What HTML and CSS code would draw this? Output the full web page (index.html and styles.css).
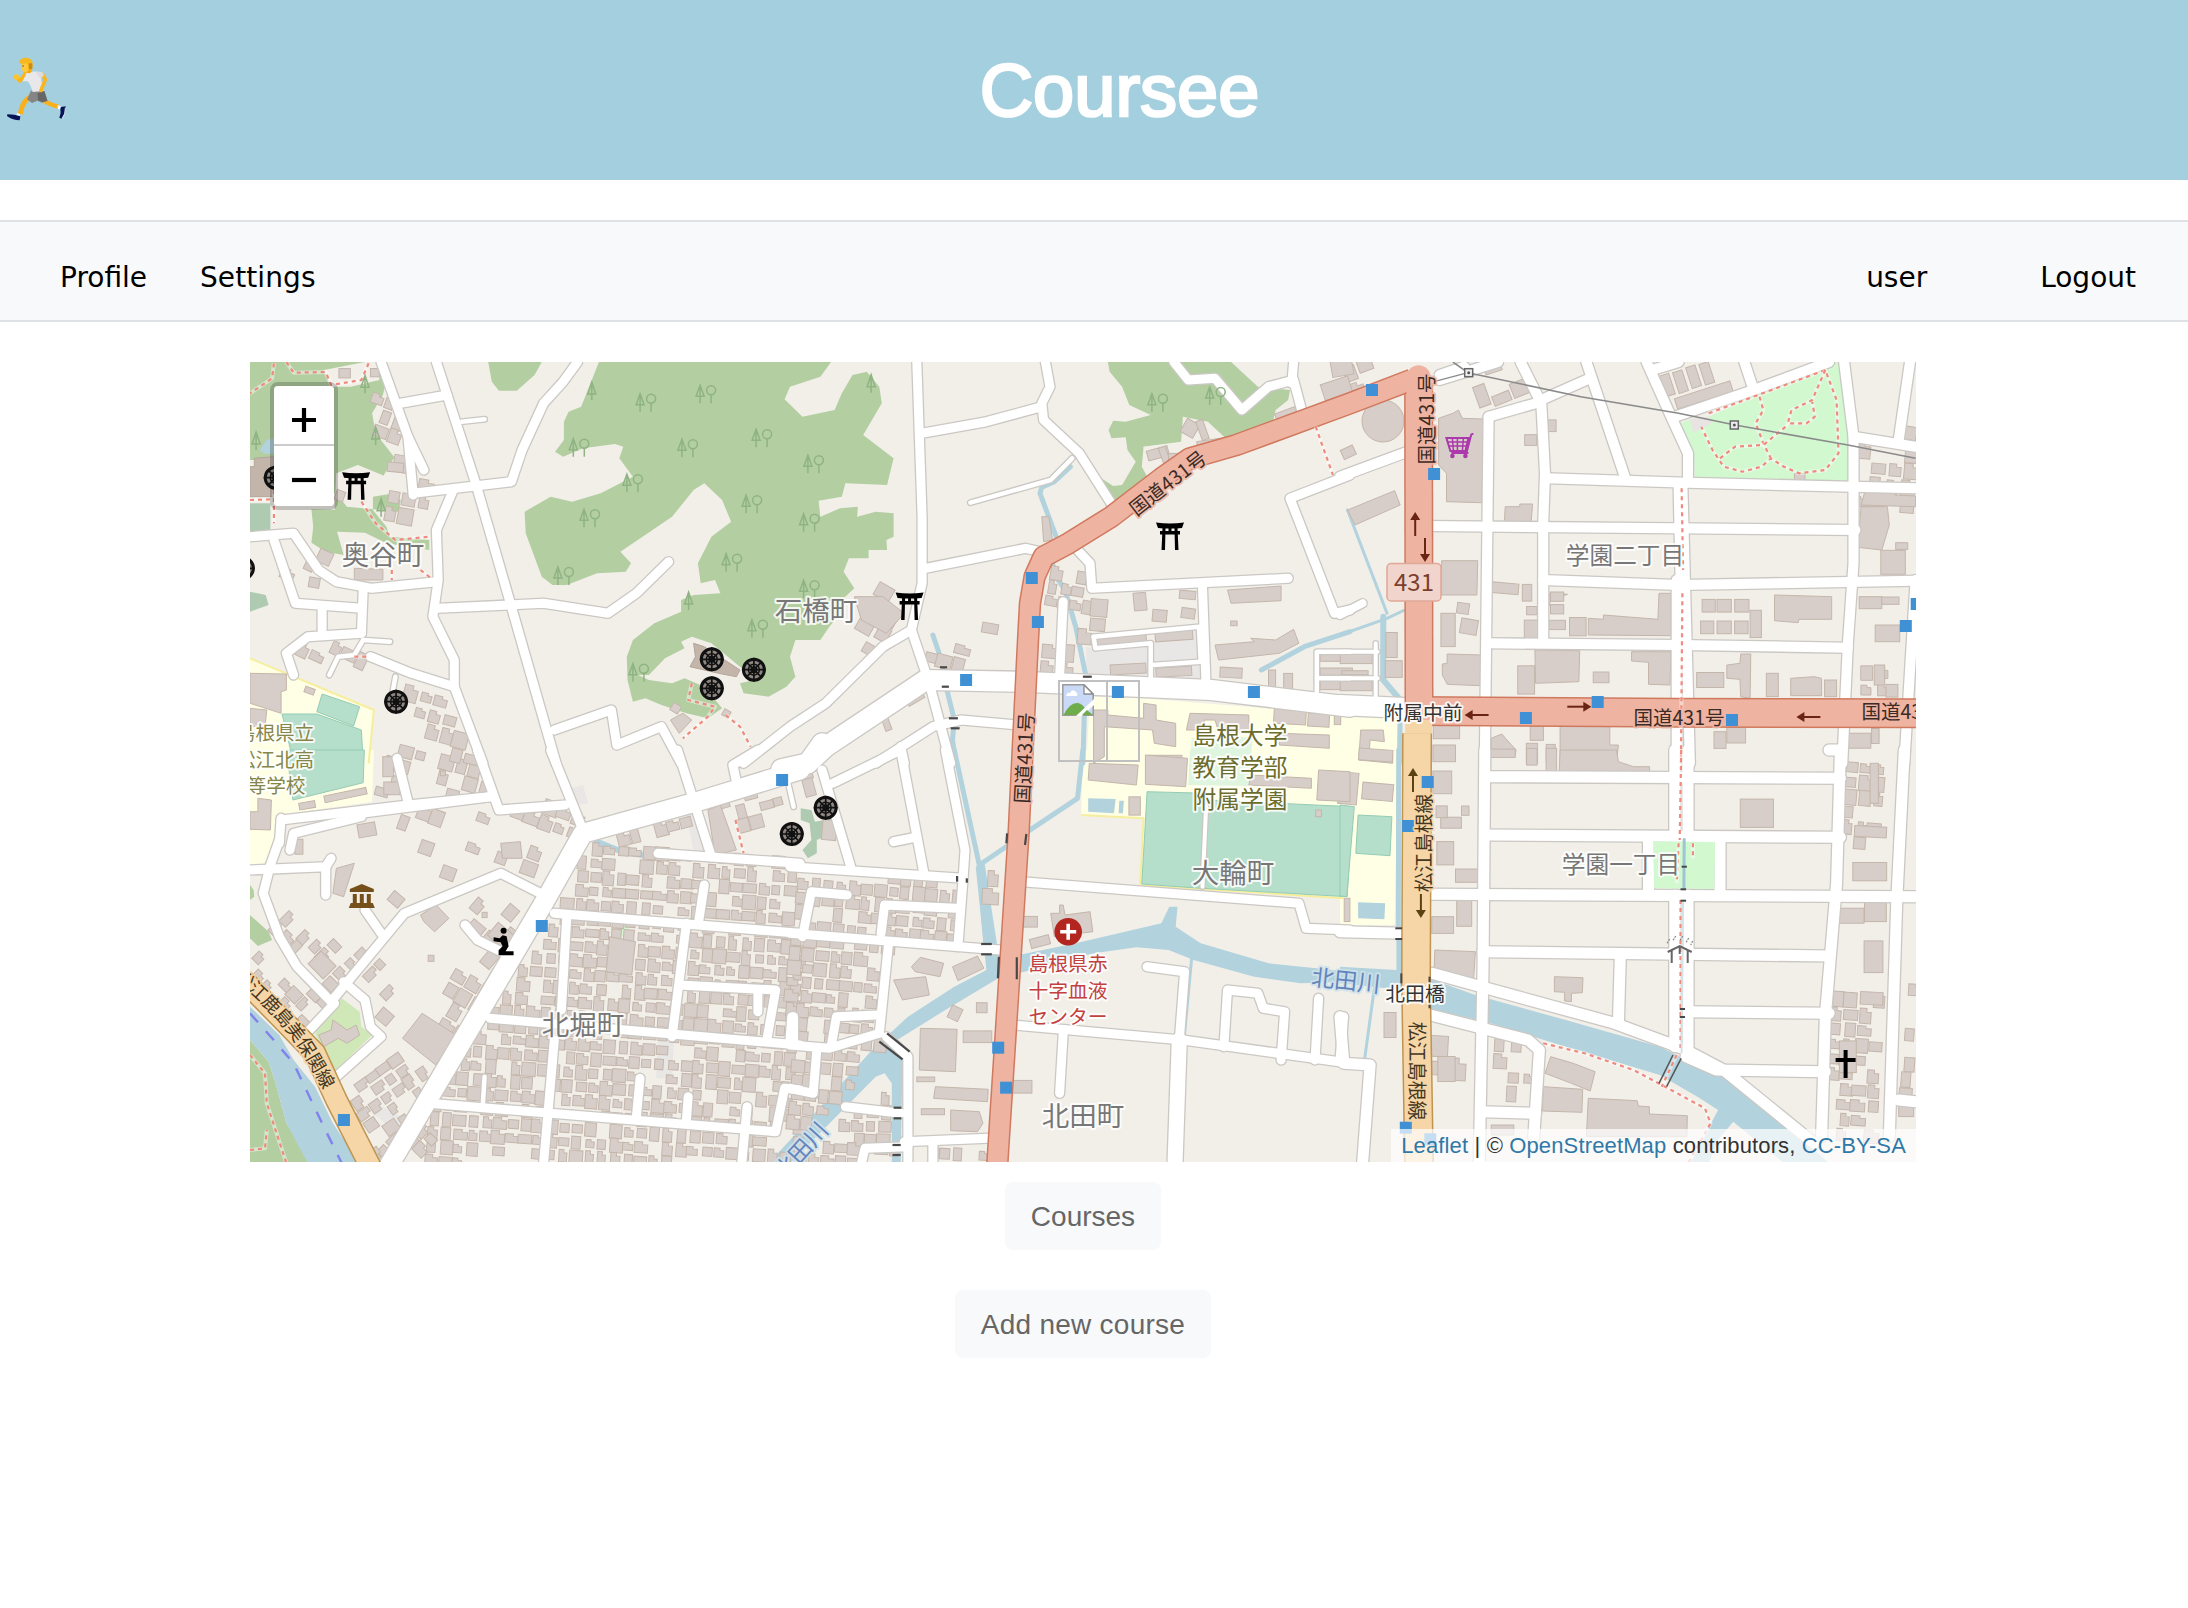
FILE: index.html
```html
<!DOCTYPE html>
<html lang="en">
<head>
<meta charset="utf-8">
<title>Coursee</title>
<link rel="stylesheet" href="styles.css">
</head>
<body>
<header class="banner">
  <svg class="runner" viewBox="0 150 153 240" aria-label="runner">
    <path d="M78 218L60 243 49 233" fill="none" stroke="#fbb51c" stroke-width="11" stroke-linecap="round" stroke-linejoin="round"/>
    <circle cx="49" cy="231" r="8" fill="#ffc52e"/>
    <path d="M90 292Q68 300 61 342" fill="none" stroke="#fbb01a" stroke-width="15"/>
    <path d="M128 300Q150 315 178 321" fill="none" stroke="#fbb01a" stroke-width="13"/>
    <path d="M52 339l9 4-3 7-10-3zM173 316l9 2-1 11-8-3z" fill="#fff"/>
    <path d="M22 343q15 1 25 2l14 4-2 12q-20 0-38-13z" fill="#071557"/>
    <path d="M183 321l14-2q-1 24-13 37l-6-3q6-14 3-26z" fill="#071557"/>
    <path d="M196 323q1 20-9 32" stroke="#d9dfe8" stroke-width="3" fill="none"/>
    <path d="M93 272h40l10 31-18 5-13-6-16 7-15-11z" fill="#858585"/>
    <path d="M113 280l20-6 9 28-14 4-14-5z" fill="#666"/>
    <path d="M80 218q25-7 48-1l-5 20 8 36-33 3q-6-22-15-32l-15 0z" fill="#e8e8ea"/>
    <path d="M127 222l9 17-13 32" fill="none" stroke="#fbb51c" stroke-width="11" stroke-linecap="round" stroke-linejoin="round"/>
    <path d="M108 217l20 0 4 10-12 8z" fill="#dcdce0"/>
    <path d="M80 200h15v15q-8 8-15 2z" fill="#f5a914"/>
    <ellipse cx="76" cy="200" rx="13" ry="16" fill="#ffc83d"/>
    <path d="M57 188q3-16 23-15 20 2 18 22l-1 12-12 2-3-19q-15 4-25-2z" fill="#f6b81f"/>
    <path d="M86 190l11 0 0 17-10 1z" fill="#cc8b13"/>
    <circle cx="69" cy="198" r="2" fill="#5b3b13"/>
  </svg>
  <h1 class="title">Coursee</h1>
</header>
<nav class="menu">
  <a class="profile">Profile</a>
  <a class="settings">Settings</a>
  <span class="user">user</span>
  <a class="logout">Logout</a>
</nav>
<main class="content">
  <section class="map">
    <svg class="tiles" id="tiles" viewBox="250 362 1666 800"></svg>
    <div class="marker-shadow"></div>
    <div class="marker">
      <svg class="broken" viewBox="0 0 32 32">
        <path d="M.8.8H22L31.200 10V31.200H.8z" fill="#c9d9f6" stroke="#9a9a9a" stroke-width="1.500"/>
        <path d="M4 12q1-4 4-3 2-5 6-1 2 1 1 4z" fill="#fff"/>
        <path d="M1.500 31Q8 18 16 19q5 1 8 7v5z" fill="#6fad4c"/>
        <path d="M32 15L14 32h6L32 21z" fill="#fff"/>
        <path d="M20 31l5-5 6 5z" fill="#6fad4c"/>
        <path d="M22 1v9h9z" fill="#fff" stroke="#8d8d8d" stroke-width="1.300"/>
      </svg>
    </div>
    <div class="zoom">
      <a class="zoom-button"><svg viewBox="0 0 24 24"><path d="M0 12h24M12 0v24" stroke="#000" stroke-width="4.200"/></svg></a>
      <a class="zoom-button"><svg viewBox="0 0 24 24"><path d="M0 12h24" stroke="#000" stroke-width="4.200"/></svg></a>
    </div>
    <div class="attribution"><a>Leaflet</a> | © <a>OpenStreetMap</a> contributors, <a>CC-BY-SA</a></div>
  </section>
  <button class="btn courses">Courses</button>
  <button class="btn add">Add new course</button>
</main>
<script src="map.js"></script>
</body>
</html>
```
FILE: styles.css
```css
* { box-sizing: border-box; }
body { margin: 0; background: #fff; font-family: "Liberation Sans", Arial, sans-serif; color: #212529; }
.banner { height: 180px; background: #a4cfdf; display: flex; align-items: center; }
.runner { width: 51px; height: 80px; overflow: visible; flex: none; }
.title { flex: 1; margin: 1px 0 0; text-align: center; color: #fff; font-size: 74px; line-height: 90px; font-weight: 400; letter-spacing: 0; -webkit-text-stroke: 2.6px #fff; }
.menu { margin-top: 40px; height: 102px; padding: 14px 52px 0 60px; display: flex; align-items: center; background: #f8f9fb; border-top: 2px solid #dee2e6; border-bottom: 2px solid #dee2e6; font: 28px/42px "DejaVu Sans", Verdana, sans-serif; color: #000; }
.profile { width: 140px; }
.user { margin-left: auto; width: 174px; }
.settings { letter-spacing: .1px; }
.content { display: flex; flex-direction: column; align-items: center; padding: 40px 22px 0 0; }
.map { position: relative; width: 1666px; height: 800px; overflow: hidden; background: #f2efe9; }
.tiles { display: block; width: 1666px; height: 800px; font-family: "Noto Sans CJK JP", "Noto Sans", sans-serif; }
.tiles text { text-anchor: middle; dominant-baseline: central; paint-order: stroke; stroke: #fff; stroke-width: 4px; stroke-linejoin: round; stroke-opacity: .85; }
.marker, .marker-shadow { position: absolute; left: 808px; top: 318px; height: 82px; border: 2px solid #c0c0c0; }
.marker { width: 50px; padding: 2px; }
.marker-shadow { width: 82px; }
.broken { display: block; width: 32px; height: 32px; }
.zoom { position: absolute; left: 20px; top: 20px; border: 4px solid rgba(0,0,0,.2); border-radius: 8px; background-clip: padding-box; }
.zoom-button { display: flex; width: 60px; height: 60px; align-items: center; justify-content: center; background: #fff; border-radius: 0 0 4px 4px; }
.zoom-button:first-child { padding-top: 10px; border-bottom: 2px solid #ccc; border-radius: 4px 4px 0 0; }
.zoom-button:last-child { padding-top: 8px; }
.zoom-button svg { width: 24px; height: 24px; }
.attribution { position: absolute; right: 0; bottom: 0; width: 525px; height: 33px; padding-right: 10px; text-align: right; white-space: nowrap; background: rgba(255,255,255,.7); font-size: 22px; line-height: 33px; letter-spacing: .14px; color: #333; }
.attribution a { color: #2f78a8; }
.btn { height: 68px; padding: 0; border: 0; border-radius: 8px; background: #f8f9fb; color: #666; font: 28px/69px "Liberation Sans", Arial, sans-serif; }
.courses { width: 156px; margin-top: 20px; }
.add { width: 256px; margin-top: 40px; letter-spacing: .25px; }
```
FILE: map.js
```js
// Each sheet has an origin and a survey scale; features are listed in sheet units.
const sheets = {
  A: [240, 350, 2.8], B: [790, 350, 2.8], C: [1340, 350, 2.658],
  D: [240, 750, 2.8], E: [790, 750, 2.8], F: [1340, 750, 2.658]
};
const conv = (s, x, y) => [+(sheets[s][0] + x / sheets[s][2]).toFixed(1), +(sheets[s][1] + y / 3).toFixed(1)];
const pts = (s, str) => str.trim().split(/\s+/).map(p => conv(s, ...p.split(',').map(Number)));
const out = { land: '', building: '', water: '', casing: '', road: '', main: '', path: '', over: '', icon: '', label: '' };
const area = (s, fill, list, layer = 'land', stroke = 'none') => list.split('|').forEach(p => {
  out[layer] += `<polygon points="${pts(s, p).join(' ')}" fill="${fill}" stroke="${stroke}"/>`;
});
const line = (layer, s, p, w, color, extra = '') => {
  out[layer] += `<polyline points="${pts(s, p).join(' ')}" fill="none" stroke="${color}" stroke-width="${w}" stroke-linejoin="round" ${extra}/>`;
};
const roads = (s, w, list) => list.split('|').forEach(p => {
  line('casing', s, p, w + 2.6, '#cbc8c4', 'stroke-linecap="round"');
  line('road', s, p, w, '#fff', 'stroke-linecap="round"');
});
const stream = (s, w, list) => list.split('|').forEach(p => line('water', s, p, w, '#b2d2dd', 'stroke-linecap="round"'));
const foot = (s, list) => list.split('|').forEach(p => {
  line('path', s, p, 4, '#fff', 'stroke-opacity=".45"');
  line('path', s, p, 2.2, '#f08a7c', 'stroke-dasharray="4 4"');
});
const bld = (s, list) => area(s, '#d7cec9', list, 'building', '#c4b6ab');
// Boxes: "x,y,w,h,angle" around the centre, size in sheet units.
const box = (s, list) => list.trim().split(/\s+/).forEach(b => {
  const [x, y, w, h, a = 0] = b.split(',').map(Number);
  const [cx, cy] = conv(s, x, y), W = w / sheets[s][2], H = h / 3;
  out.building += `<rect x="${(cx - W / 2).toFixed(1)}" y="${(cy - H / 2).toFixed(1)}" width="${W.toFixed(1)}" height="${H.toFixed(1)}" transform="rotate(${a} ${cx} ${cy})" fill="#d7cec9" stroke="#c4b6ab"/>`;
});
let seed = 7;
const rnd = () => (seed = (seed * 16807) % 2147483647) / 2147483647;
const inside = (x, y, poly) => {
  let r = false;
  for (let i = 0, j = poly.length - 1; i < poly.length; j = i++) {
    const [xi, yi] = poly[i], [xj, yj] = poly[j];
    if (yi > y !== yj > y && x < (xj - xi) * (y - yi) / (yj - yi) + xi) r = !r;
  }
  return r;
};
// Houses set close together in a block, turned to the street angle.
const houses = (s, p, angle, density = .85, step = 14) => {
  const poly = pts(s, p), xs = poly.map(q => q[0]), ys = poly.map(q => q[1]);
  const cx = (Math.min(...xs) + Math.max(...xs)) / 2, cy = (Math.min(...ys) + Math.max(...ys)) / 2;
  const R = Math.hypot(Math.max(...xs) - cx, Math.max(...ys) - cy), a = angle * Math.PI / 180;
  for (let v = -R; v < R; v += step) for (let u = -R; u < R; u += step * .93) {
    const x = cx + u * Math.cos(a) - v * Math.sin(a), y = cy + u * Math.sin(a) + v * Math.cos(a);
    const w = step * (.55 + rnd() * .45), h = step * (.55 + rnd() * .5), keep = rnd() < density, ell = rnd() < .5, dx = (rnd() - .5) * 3;
    if (!keep || !inside(x, y, poly)) continue;
    const d = ell ? `M${-w / 2} ${-h / 2}h${w * .6}v${h * .25}h${w * .4}v${h * .75}h${-w}z` : `M${-w / 2} ${-h / 2}h${w}v${h}h${-w}z`;
    out.building += `<path d="${d}" transform="translate(${(x + dx).toFixed(1)} ${y.toFixed(1)}) rotate(${angle})" fill="#d7cec9" stroke="#c4b6ab"/>`;
  }
};
const G = '#b3cfa2', SCHOOL = '#ffffe5', PITCH = '#b5decb', PARK = '#d2f8d0', GREY = '#e9e7e6';

// Woods and parks
area('A', G, `28,36 390,36 410,90 400,135 370,190 380,250 432,322 400,380 350,368 270,370 265,480 200,478 205,530 200,578 240,605 290,615 272,545 350,548 410,580 530,600 530,570 420,560 410,530 372,480 372,440 430,430 450,450 445,485 300,470 270,430 100,430 100,330 28,330|695,36 845,36 825,75 775,122 725,122 705,95|1005,36 1655,36 1625,80 1540,110 1525,148 1575,200 1665,180 1685,130 1715,75 1755,65 1790,110 1797,160 1745,255 1830,325 1812,405 1695,400 1685,440 1620,452 1625,500 1680,475 1730,470 1728,500 1780,485 1830,490 1830,560 1810,570 1812,600 1760,600 1760,625 1705,625 1690,665 1720,715 1690,745 1690,780 1650,830 1625,870 1555,870 1540,920 1555,980 1530,1010 1480,1040 1410,1030 1400,1000 1440,990 1400,950 1320,880 1265,860 1235,875 1245,895 1190,925 1145,975 1115,975 1145,990 1210,1000 1245,985 1300,1010 1350,1075 1310,1105 1250,1090 1180,1065 1135,1045 1100,1055 1085,990 1083,920 1100,870 1160,820 1235,785 1235,750 1270,735 1345,730 1330,690 1290,700 1282,640 1320,560 1375,515 1350,450 1300,400 1270,420 1210,500 1065,605 1095,640 1080,665 1000,670 915,705 875,705 845,680 800,550 797,485 870,440 930,455 1010,430 1100,380 1062,325 1073,290 1050,282 960,295 905,320 882,305 907,270 907,215 920,185 955,170 985,90`);
area('A', '#f2efe9', '235,60 350,36 390,36 390,90 310,110 255,110|330,345 410,380 370,430 300,470 270,430 270,370');
area('A', '#aecbb2', '28,460 85,460 85,545 28,545|28,725 72,735 80,765 28,785');
area('B', G, '890,36 1235,36 1310,110 1400,120 1395,150 1360,180 1350,225 1220,270 1110,275 990,290 995,360 1010,400 905,465 865,380 905,408 930,405 968,335 945,300 940,262 900,265 892,240 905,212 940,215 1010,195 950,165 930,110 895,65');
area('B', '#f2efe9', '1100,200 1170,215 1220,265 1120,310 1010,400 985,350 990,290 1095,275');
area('D', G, '28,405 38,420 40,440 28,450|28,495 80,545 90,570 50,588 28,565|28,870 80,935 100,1000 130,1120 200,1240 28,1240');
area('D', '#d0e8b8', '285,745 335,785 340,830 370,855 265,965 210,850');
area('D', PARK, '1045,520 1090,525 1085,562 1042,555');
area('E', '#aecbb2', '30,175 60,180 70,215 122,205 120,250 75,270 75,310 50,325 35,300 60,270 55,220 30,210');
area('C', PARK, '903,222 930,208 980,200 1300,36 1330,36 1352,270 1352,398 942,385 942,330');
// School grounds
area('A', SCHOOL, '28,925 375,1080 360,1240 28,1240');
area('D', SCHOOL, '28,0 375,0 370,155 110,195 85,345 28,345');
area('B', SCHOOL, '840,1040 985,1045 1568,1095 1568,1240 830,1240');
area('E', SCHOOL, '820,0 1568,0 1568,530 1548,530 1550,445 985,405 990,205 815,195');
area('C', SCHOOL, '0,1100 155,1105 155,1240 0,1240'); area('F', SCHOOL, '0,0 155,0 145,525 0,525');
line('land', 'A', '28,925 375,1080 360,1240', 2, '#f6ee9c'); line('land', 'E', '815,195 990,205 980,405 1550,445', 2, '#f6ee9c');
area('A', PITCH, '230,1032 335,1070 318,1128 215,1085|118,1092 215,1092 340,1140 345,1240 150,1240', 'land', '#94ccb5');
area('D', PITCH, '130,0 348,0 345,98 148,150', 'land', '#94ccb5');
area('E', PITCH, '1000,125 1168,130 1150,415 985,402|1168,150 1575,170 1560,440 1155,415', 'land', '#94ccb5');
area('F', PITCH, '0,165 38,170 18,440 0,438|48,195 138,200 133,317 42,310', 'land', '#94ccb5');
area('E', '#e0f5e0', '1120,0 1290,0 1285,108 1115,105'); area('B', '#e0f5e0', '1125,1165 1295,1160 1290,1240 1120,1240');
// Parking
area('B', GREY, '870,905 1000,890 1005,995 830,985 830,890|1020,850 1140,840 1150,1005 1020,990');
area('D', GREY, '1170,870 1215,870 1210,985 1165,985|375,1055 465,1110 450,1155 365,1085|930,115 960,105 975,160 945,165|1250,195 1280,190 1300,305 1270,305');
area('C', '#e8e4e3', '930,208 980,200 990,218 940,248');

// Built-up blocks
houses('D', '990,265 1300,300 1568,345 1568,1240 520,1240 540,1040 700,780 860,560 ', 4, .9, 14);
houses('E', '0,370 470,390 480,580 270,600 240,850 280,880 100,1080 0,1200', 5, .88, 14);
houses('D', '360,1180 520,1080 560,1240 400,1240', 45, .8, 14);
houses('D', '300,1000 430,890 540,960 480,1080 380,1220 ', 55, .7);
houses('D', '90,440 230,560 400,590 250,740 150,650 90,540', 45, .55);
houses('D', '330,690 400,600 460,700 390,790', 45, .6);
houses('D', '30,590 240,750 190,840 30,690', 45, .7);
houses('D', '430,190 650,180 960,170 980,260 880,430 730,370 620,400 510,390 520,330 450,250', 20, .42, 16);
houses('D', '590,700 660,640 720,690 690,780 600,900 500,800', 30, .7, 16);
houses('D', '640,430 830,440 800,520 740,640 640,650', 40, .5, 16);
houses('D', '1010,250 1280,180 1300,310 1060,300', -15, .6);
houses('D', '1350,150 1500,110 1568,170 1480,250 1390,230', -15, .5);
houses('D', '400,0 700,0 700,130 390,160', 15, .6, 15);
houses('A', '470,1000 600,1040 660,1240 560,1200 480,1120', 15, .7, 16);
houses('A', '150,900 330,850 420,990 270,1000', 25, .6, 16);
houses('A', '40,575 220,600 200,710 130,690', 25, .6, 16);
houses('A', '370,150 430,130 460,290 390,280', 20, .9, 15);
houses('A', '390,330 460,330 560,450 530,550 420,530', 10, .6, 17);
houses('B', '190,700 310,740 330,840 230,970', 30, .7, 19);
houses('B', '370,850 540,870 530,950 390,950', 15, .7, 16);
houses('B', '700,680 830,620 840,780 720,790', 10, .8, 14); houses('B', '700,840 850,850 850,970 700,970', 5, .6, 18);
houses('B', '840,740 920,760 900,840 840,820', 5, .8, 17);
houses('C', '1380,290 1530,310 1530,470 1380,470', 5, .7, 17); houses('C', '1370,970 1480,950 1480,1040 1370,1040', 0, .7, 17);
houses('C', '0,40 180,40 40,150 0,150', -20, .7, 20);
houses('F', '1345,30 1470,30 1455,280 1345,280', 5, .85, 15); houses('F', '1300,720 1440,720 1430,1160 1310,1160', 4, .75, 15);
houses('F', '1500,450 1535,450 1535,1100 1490,1100', 4, .5, 15);
houses('F', '395,860 510,900 510,1060 390,1050', 3, .65, 16); houses('F', '245,830 305,830 320,1130 245,1130', 3, .4, 22);
houses('E', '0,20 90,50 60,180 0,160', -15, .5, 18); houses('E', '150,1100 280,1030 280,1180 160,1180', 2, .8);
houses('E', '500,400 590,340 580,590 550,590 530,420', 3, .8, 18); houses('E', '0,1200 300,1180 560,1190 560,1240 0,1240', 3, .7);
// Larger buildings
area('A', '#c3b5aa', '40,325 95,320 95,440 28,440 28,350 40,350|1270,880 1300,890 1400,960 1390,980 1340,970 1260,950 1275,920', 'building', '#b3a59a');
bld('A', '28,970 130,972 130,1020 115,1025 115,1090 28,1060|28,1075 75,1080 70,1130 28,1130|320,655 400,658 400,690 320,690|1205,1110 1240,1090 1265,1110 1230,1150');
box('A', '237,622,40,40,25 293,70,32,28 378,68,25,25 195,1022,28,18,20 208,698,30,30,10 435,352,45,28,5 1220,1075,25,25,30 1362,1090,20,20,30 280,437,25,30,20');
bld('B', '705,500 725,500 735,570 710,575|960,730 995,727 1000,780 965,783|1190,885 1300,875 1290,865 1360,870 1410,838 1425,880 1370,910 1200,930|1225,720 1375,708 1375,752 1235,760|180,740 260,740 320,790 270,850 200,810');
box('B', '560,835,45,30,10 1035,797,40,35,5 1113,735,45,25,5 1115,790,38,30,8 925,870,145,28,-4 1075,858,105,28,-4 947,957,100,30,-3 1075,965,100,28,-3 1235,968,62,30,3 1243,820,18,14 1350,990,20,60 1395,995,25,50 1530,920,90,28 1530,965,90,22 1530,1005,90,28 1545,50,60,55,-10 1530,115,80,50,-18 1390,195,60,30,-20 1120,235,40,45,30 1155,240,20,60,-20 1180,280,80,22,-8 1030,310,60,30,-15 1050,320,20,60,-20 1075,320,30,20 350,1045,50,25,-30 270,1120,18,45,-20');
bld('B', '850,1080 890,1080 890,1095 990,1105 990,1060 1025,1065 1025,1110 1080,1120 1080,1190 1020,1180 1015,1140 880,1130 880,1220 850,1240|1120,1090 1285,1095 1285,1150 1200,1145 1190,1110 1160,1110 1160,1140 1110,1140|1370,1150 1510,1155 1510,1195 1370,1185');
box('B', '1400,1100,90,45,3 1480,1110,60,40,3 1533,1110,18,28 1050,1228,95,24');
bld('C', '262,205 300,190 315,180 325,205 383,207 377,458 283,455 283,370 262,345|270,632 366,632 364,735 270,735|20,480 145,422 160,465 40,525|439,470 478,470 478,462 512,462 508,518 437,516|555,730 605,733 560,750 555,770|660,805 700,808 700,795 845,808 848,730 880,730 880,857 660,855|518,900 637,902 635,995 520,1000|285,912 375,915 373,1007 285,1003 272,975 272,942 285,940|775,905 880,905 877,1005 820,1003 820,937 775,933|1385,470 1455,470 1460,525 1440,600 1375,592|1155,735 1307,740 1307,808 1220,808 1218,818 1155,812|1065,912 1092,912 1090,1045 1065,1040 1063,988 1028,985 1028,945 1063,940|1198,985 1260,980 1280,985 1280,1037 1198,1037|1400,405 1475,405 1475,435 1530,438 1530,470 1385,465');
out.building += `<circle cx="1383" cy="421" r="21" fill="#d7cec9" stroke="#c4b6ab"/>`;
box('C', '507,270,32,32 562,227,25,35 287,840,38,100 343,830,45,45,10 327,775,32,32,8 440,715,70,32,5 497,728,25,50 510,782,28,25 508,838,36,55 577,740,35,28 577,778,35,28 577,825,44,28 632,830,44,55 694,982,42,32 495,990,45,85 984,990,72,45 980,767,35,38 1021,767,38,38 1068,767,38,38 976,832,35,38 1021,832,38,38 1067,832,36,38 1105,822,30,82 1149,1005,32,70 1304,1015,32,50 1455,850,65,50 1470,637,65,72 1493,588,32,20 1410,758,60,36 1463,752,46,22 1434,975,28,60 1467,1022,32,38 1515,250,35,40,10 870,105,26,65,-18 905,95,26,65,-18 940,80,26,65,-18 975,70,26,65,-18 967,135,155,33,-18 377,137,32,65,-20 430,145,48,30,-22 478,115,45,45,-22 22,307,35,30,-25 405,50,45,35,-18 137,885,30,75 143,957,45,50 43,927,85,28 40,968,70,12 43,1007,85,30 1222,380,28,20 283,1145,70,42 277,1210,60,50 523,1150,35,42 510,1210,30,60 560,1208,24,50 1010,1170,32,50 1053,1155,50,48 1380,1172,62,45 1423,1158,20,45');
bld('C', '402,1165 430,1152 440,1165 468,1200 465,1220 402,1218|585,1125 717,1130 717,1185 740,1185 735,1240 585,1240|55,1140 115,1140 118,1175 80,1170 78,1205 140,1212 140,1240 50,1230');
bld('F', '585,0 735,0 740,35 780,50 823,50 823,66 583,64|660,1045 790,1052 793,1068 822,1070 822,1092 923,1097 922,1160 655,1160|540,1010 645,1018 643,1087 538,1083|560,920 620,940 678,965 665,1023 615,1000 545,970|570,680 646,683 644,728 615,730 615,755 597,753 597,727 570,725|252,600 360,605 355,688 250,660');
box('F', '1108,190,88,85 272,97,50,68 100,125,82,50,5 22,115,50,95,5 337,377,60,40 273,525,58,50 330,490,40,78 283,957,46,75 433,10,65,25 510,20,28,50 562,30,28,70 1408,365,90,55 1418,620,50,95 1423,480,58,70 1360,497,65,45 1413,745,60,38,3 1505,1080,40,40 133,825,32,75 95,15,90,35,4 1410,245,85,32,3 1350,920,45,95 295,218,55,33 280,310,45,70 270,185,30,35 333,182,20,28 432,1140,60,30 1420,100,22,120');
bld('E', '365,835 468,838 463,965 362,960|407,1010 555,1018 553,1055 402,1045|290,690 380,680 390,735 315,750|340,650 365,622 430,640 420,680 350,665|455,650 525,618 543,655 470,692|450,1080 530,1085 540,1120 525,1145 450,1142|838,40 975,45 970,105 835,90|995,15 1113,25 1108,110 995,103|1290,75 1460,85 1460,115 1285,105|1480,60 1568,65 1568,155 1475,150|730,490 755,490 755,465 765,465 770,495 840,485 848,545 740,560');
box('E', '670,515,45,32 700,575,55,28,-15 537,773,30,30 525,860,80,35 650,1010,55,38 965,168,32,55 462,790,32,40,25 380,988,50,14 400,1085,65,18 1560,480,16,70 110,240,40,60,5 1480,190,16,20');
bld('D', '510,790 605,855 548,945 455,865|1035,560 1107,575 1097,675 1025,665|1310,180 1345,165 1390,300 1330,315|505,495 550,465 585,505 545,545 515,515|730,280 785,275 790,325 735,325|270,355 320,340 290,440 260,430|28,185 50,185 50,145 88,150 85,240 28,238|220,855 255,840 260,810 300,840 325,825 335,855 300,880 275,865 235,890');
box('D', '188,166,45,20,-10 295,135,120,20,-12 415,50,30,60 425,115,45,38 355,240,50,40,-10 165,290,22,45 437,448,38,35,40 230,645,60,55,45 535,625,16,18 405,800,40,40,40 568,70,14,14 685,495,14,16 735,560,70,50,40');
// Water
area('D', '#b2d2dd', '28,770 110,855 150,930 210,1010 260,1120 335,1240 190,1240 130,1120 100,1000 80,935 28,870', 'water');
area('E', '#b2d2dd', '640,615 800,580 1040,520 1062,470 1085,470 1080,530 1150,580 1340,640 1568,665 1568,695 1430,700 1300,680 1130,630 1060,600 970,592 850,610 640,670|585,620 590,680 420,790 300,870 315,930 310,1240 285,1240 285,1000 265,970 240,980 0,1240 -60,1240 60,1100 230,900 330,800 460,710 550,660 520,350 545,340|835,145 912,147 907,190 835,185|922,152 935,152 932,190 920,190', 'water');
area('F', '#b2d2dd', '0,650 150,660 150,560 165,540 165,720 0,700|235,685 360,735 600,810 850,890 930,935 1050,1000 1180,1115 1300,1240 1180,1240 1045,1115 1005,1170 980,1240 930,1240 1005,1080 950,1040 850,975 600,890 400,820 235,775|48,457 120,460 118,508 48,505', 'water');
area('A', '#b2d2dd', '55,300 75,270 100,265 100,310 70,312', 'water');
stream('B', 5, '785,350 740,395 705,412 700,430 745,560|735,640 745,680 770,720 800,830 828,975|400,855 430,950|437,1010 460,1110 455,1170 465,1240|825,1060 820,1240|1568,845 1440,890 1320,960');
stream('E', 5, '460,0 530,345 605,290|665,245 805,145 820,0|530,345 550,600');
stream('E', 3, '1125,620 1105,850|70,1040 160,1060');
stream('C', 3, '20,480 125,790|0,855 125,805 172,780'); stream('C', 6, '115,800 115,990 160,1050');
stream('C', 5, '160,1080 158,1240'); stream('F', 5, '156,0 155,560'); stream('F', 3, '93,700 65,930');
stream('D', 6, '1000,275 1070,305 1160,320');
line('water', 'D', '28,790 90,865 150,940 230,1120 285,1240', 2.4, '#8083ee', 'stroke-dasharray="12 12"');

// Streets
roads('A', 9, '395,36 470,260 515,360|470,260 485,435|550,36 660,400 760,770 885,1240|450,160 580,135|485,430 760,395 790,300 850,160 905,95 945,36|595,425 550,540 555,690 540,800 600,930 600,1010 680,1240|28,560 150,550 220,660 270,695 370,715 550,695|95,570 155,760 340,775|345,720 340,850|230,780 230,840|555,775 850,760 1030,790 1110,730 1200,635|340,850 190,860 130,910 150,975|365,920 480,970 600,1010|880,1140 1040,1080 1055,1185 1180,1130 1235,1240');
roads('A', 4.5, '620,215 685,208|345,870 420,875|345,870 320,915 275,920 250,975|435,980 425,1040');
roads('B', 9, '355,36 370,500 370,700 340,840|370,250 550,215 705,170|715,36 728,110 705,160 710,210 810,310 905,470|380,655 660,595 700,605|805,600 840,640 845,715 1395,685|1075,36 1115,90 1190,85 1265,180 1340,110 1410,90 1435,190|1410,36 1405,100|1568,375 1400,445 1525,790 1568,780|765,755 755,980|1155,710 1165,1010|340,840 260,890 100,1060 0,1130 -130,1240|340,840 390,1000 450,1240|640,1125 480,1110 400,1130 240,1240|310,1190 320,1240');
roads('B', 4.5, '790,325 730,390 505,458|850,860 1145,830 1150,935 1015,945|850,860 855,895 1010,880 1010,1000|1475,1040 1475,905 1568,905|1475,985 1568,985');
roads('B', 20, '50,1240 100,1190 380,990 650,995 1180,1020 1568,1070');
roads('C', 10, '0,380 180,305|480,36 535,160 545,370 540,520 540,870|265,90 420,36|655,36 680,120 760,390|545,145 665,85|395,200 535,155|395,200 385,1240|815,36 880,200 925,310 925,380|830,60 900,36|1075,36 1095,105|890,200 1100,120 1300,36|550,385 925,398 1530,415|240,528 890,535 1370,540|540,690 900,705 1530,692|395,880 900,885 1350,893|1340,36 1365,260 1365,640 1350,880 1335,1240|1365,260 1530,290|1515,36 1485,270|900,405 905,680|910,410 930,1240|895,690 895,1240|1530,690 1500,1240');
roads('C', 8, '0,795 60,760'); roads('C', 4, '0,905 100,905|0,985 100,985|95,880 95,1040'); roads('C', 20, '0,1065 185,1075');
roads('D', 9, '440,25 470,155|28,360 240,350 240,435|240,350 255,325|110,270 85,345 65,430 110,560 160,650 255,755|115,205 110,280|115,210 470,165 700,140|140,300 150,250 340,200 340,190 700,140|665,0 725,180 910,165|870,0 960,240|255,755 460,490 730,370 860,440|350,480 395,550|290,695 350,750 365,830 395,860 270,980|265,760 195,840|630,525 665,570 740,610|1225,0 1320,320|1170,310 1568,340|1450,0 1380,45 1390,95|880,490 1568,550|915,500 900,780|880,870 850,1240|700,805 1568,885|1250,520 1210,860|1230,705 1500,720 1475,870|1450,720 1450,785|1300,405 1285,510|530,1060 1500,1145 1525,1015 1568,1020|1120,985 1110,1100|1255,1040 1250,1110|1420,1070 1405,1240|1545,800 1540,870');
roads('D', 4.5, '685,980 680,1060|1535,100 1550,170');
roads('D', 19, '410,1260 520,1060 850,460 960,250 1280,155 1568,60');
roads('E', 20, '-24,58 50,40 90,-20');
roads('E', 9, '90,60 170,350|120,100 310,0 375,370|290,275 350,262|435,0 490,300 485,380 470,590|0,350 485,385|0,550 590,600|160,435 60,425 35,560|255,550 265,465 465,475|275,590 250,850|250,850 110,895 0,885|115,890 130,800 245,795|75,900 65,1030 0,1015|10,800 10,880|270,860 330,920 330,1240|155,1070 310,1090|200,1240 210,1195 330,1190|320,1175 555,1165|400,1180 400,1240|650,395 1425,460 1445,535 1568,540|625,825 1100,870 1568,940|765,850 755,1030|1000,650 1105,665 1090,870|1215,890 1225,720 1310,730 1325,775 1385,785 1375,930|1480,745 1470,930|1550,800 1540,930'); roads('E', 15, '1090,870 1078,1240');
roads('E', 4, '1165,170 1155,410');
roads('F', 11, '385,0 380,660 370,1240|395,80 1330,85|390,255 1330,262|245,433 1530,440|380,605 1300,618|1300,0 1330,0 1320,400 1290,800 1280,1160|890,0 890,262|890,435 890,890|925,0 925,262|925,435 925,900|820,270 820,420|1010,270 1010,420|745,620 740,820|925,785 1300,790|245,670 730,820 910,895 1020,960 1260,1180|920,920 1000,960 1290,965|240,795 500,870 530,900 515,1160|375,1085 520,1090|1500,0 1480,450 1460,1160|1485,1050 1530,1055|0,545 170,550|0,800 10,940 80,945 60,1240');
area('F', PARK, '832,274 997,276 995,417 835,415', 'road');
// Trunk roads
const trunk = (s, w, p, c, k) => { line('main', s, p, w + 3, k); line('main', s, p, w, c); };
const RED = '#eeb4a1', RK = '#d0795e', OR = '#f6d5a6', OK = '#bf9450';
trunk('F', 27, '205,-50 202,700 210,1240', OR, OK);
trunk('D', 20, '10,690 120,810 210,910 270,1050 370,1260', OR, OK);
trunk('C', 26, '209,100 210,1090', RED, RK);
trunk('C', 27, '195,1083 900,1088 1540,1090', RED, RK);
trunk('B', 19.5, '580,2450 640,1450 665,900 672,760 685,680 710,620 780,580 900,500 1040,385 1120,325 1250,285 1568,160 1741,89', RED, RK);
line('main', 'C', '209,82 209,140', 24, RED, 'stroke-linecap="round"');
line('main', 'C', '210,1030 210,1100', 26, RED); line('main', 'C', '209,1110 209,1150', 27, OR);
roads('C', 10, '265,75 330,50');

foot('A', '95,40 90,85 28,130|130,36 150,68 240,66 255,105 340,90 360,40|340,455 380,520 435,570 530,560|95,420 95,520|28,450 90,448|425,660 425,690|505,660 535,685|1265,1000 1255,1050 1330,1070 1310,1100 1240,1165|1360,1095 1400,1130 1430,1190|320,920 360,920');
foot('B', '1472,230 1520,375'); foot('D', '1387,210 1410,310|28,915 70,970 75,1060 130,1240|28,1200 70,1195 75,1140');
foot('C', '980,190 1290,60 1320,150 1325,310 1290,360 1220,370 1180,350 1145,325 1120,350 1070,365 1020,350 990,300 960,230|1115,140 1125,180 1105,220 1125,280 1145,325|1290,60 1255,150 1200,180 1190,220 1240,220 1262,200 1255,155|1010,325 1050,290 1125,285 1190,225|908,415 912,660|910,730 906,1240');
foot('F', '907,0 903,270|900,280 895,400|938,280 938,325|905,450 905,900|540,880 650,910 780,960 880,1020 970,1075 985,1120 925,1240|895,915 855,1010');
line('over', 'F', '915,265 914,420', 3, '#9fc5d4'); line('over', 'F', '912,450 908,910', 2, '#d4e2e6');
line('over', 'F', '885,915 848,1000', 1.5, '#555'); line('over', 'F', '907,925 868,1010', 1.5, '#555');
line('over', 'C', '300,36 340,68 640,140 900,190 1050,225 1350,285 1530,325', 1.6, '#8a8a8a'); line('over', 'C', '340,68 250,95', 1.2, '#8a8a8a');
[[342, 68], [1048, 225]].forEach(([x, y]) => { const [a, b] = conv('C', x, y); out.over += `<rect x="${a - 4}" y="${b - 4}" width="8" height="8" fill="#eee" stroke="#666" stroke-width="1.500"/><circle cx="${a}" cy="${b}" r="1.500" fill="#555"/>`; });
['250,875 315,928|272,850 335,905|608,250 606,280|662,252 658,285|585,620 582,685|635,622 635,688|535,582 565,582|535,613 565,613|468,378 468,395|495,385 495,398|290,1073 312,1073|290,1105 312,1105|287,1185 310,1185|287,1215 310,1215'].forEach(l => l.split('|').forEach(p => line('over', 'E', p, 2.2, '#484848')));
'420,952 440,952|425,1010 445,1010|820,980 845,980|445,1105 470,1105|450,1135 475,1135'.split('|').forEach(p => line('over', 'B', p, 2.2, '#484848'));
'147,535 165,535|147,567 165,567|163,670 163,700|238,680 238,705|238,750 238,775|905,418 920,418|905,452 920,452|903,777 917,777|903,801 917,801|908,350 922,350'.split('|').forEach(p => line('over', 'F', p, 2, '#484848'));

// Symbols
const at = (s, x, y, d) => { const [a, b] = conv(s, x, y); out.icon += `<g transform="translate(${a} ${b})">${d}</g>`; };
const pair = '<g fill="none" stroke="#8fb383" stroke-width="1.500"><path d="M-6 10V-6M-10 3L-6-8-2 3z"/><circle cx="5" cy="-3" r="4.500"/><path d="M5 2V10"/></g>';
[[1137, 155], [1305, 130], [950, 290], [1254, 292], [1462, 262], [980, 502], [1434, 460], [1378, 635], [907, 675], [1450, 833], [1117, 965], [1100, 397], [1607, 340], [1595, 515], [1595, 715]].forEach(p => at('A', ...p, pair));
[[1030, 155], [1192, 135]].forEach(p => at('B', ...p, pair));
const single = '<path d="M0 10V-6M-4 4L0-8 4 4z" fill="none" stroke="#8fb383" stroke-width="1.500"/>';
[[395, 470], [45, 270], [380, 255], [985, 120], [1256, 750], [350, 100], [1767, 98]].forEach(p => at('A', ...p, single));
const torii = '<path d="M-14-13.500Q0-11.500 14-13.500L12-8Q0-7-12-8z"/><path d="M-10-5H10V-1.500H-10zM-7.500-8H-4.500L-5 14H-8.500zM4.500-8H7.500L8.500 14H5zM-1.500-8H1.500V-3H-1.500z"/>';
at('A', 325, 407, torii); at('B', 335, 768, torii); at('B', 1064, 558, torii);
const wheel = '<circle r="11" fill="#8d8682"/><g fill="none" stroke="#111"><circle r="10.500" stroke-width="3"/><circle r="5.500" stroke-width="1.500"/><path d="M0-12V12M-12 0H12M-8-8L8 8M8-8L-8 8" stroke-width="1.700"/></g><circle r="3.500" fill="#111"/>';
[['A', 437, 1055], ['A', 1321, 928], ['A', 1439, 959], ['A', 1321, 1015], ['A', 100, 383], ['A', 8, 655], ['D', 1545, 252], ['E', 100, 173]].forEach(p => at(...p, wheel));
at('D', 341, 438, '<path d="M-12-7L0-12 12-7V-4H-12zM-9-2H-5V7H-9zM-2-2H2V7H-2zM5-2H9V7H5zM-11 7H11L13 12H-13z" fill="#75501a"/>');
at('D', 738, 577, '<circle cy="-11.500" r="3"/><path d="M-10-5L-4-4-1-7 3-6 5 4 2 9H10V13H-5V8L-1 4-3 0-10-1z"/>');
at('E', 779, 545, '<circle r="13.800" fill="#b3251f"/><path d="M0-8V8M-8 0H8" stroke="#fff" stroke-width="3.600"/>');
at('C', 320, 288, '<path d="M-14-8H8L5 5H-10zM-9 7H8M11-12L6 7M11-12H13" fill="none" stroke="#ac39ac" stroke-width="2"/><path d="M-13-4H8M-12 0H7M-8-8L-7 5M-3-8V5M3-8L2 5" stroke="#ac39ac" stroke-width="1.500"/><circle cx="-8" cy="10" r="2.300" fill="#ac39ac"/><circle cx="5" cy="10" r="2.300" fill="#ac39ac"/>');
at('F', 1344, 942, '<path d="M0-14V14M-10-4H10" stroke="#000" stroke-width="4"/>');
at('F', 903, 600, '<path d="M-12 2L0-4 12 2M-8 0V13M8 0V13M0-4V4" fill="none" stroke="#666" stroke-width="2"/><path d="M-10-11l-3 5M-4-14l-3 5M3-14l-3 5M9-12l-3 5M13-9l-2 4" stroke="#888" stroke-width="1.300" stroke-dasharray="2 1"/>');
Object.entries({ B: [[677, 684], [694, 816], [493, 990], [918, 1026], [1299, 1026]], C: [[85, 120], [250, 372], [685, 1056], [494, 1104], [1042, 1110], [1504, 828], [1533, 762]], D: [[1518, 90], [845, 528], [291, 1110]], E: [[583, 893], [605, 1013]], F: [[233, 96], [181, 228], [175, 1133], [240, 1168]] })
  .forEach(([s, l]) => l.forEach(p => at(s, ...p, '<rect x="-6" y="-6" width="12" height="12" fill="#3f90d5"/>')));
const arrow = (s, x, y, a, c) => at(s, x, y, `<g transform="rotate(${a})"><path d="M-12 0H6" stroke="${c}" stroke-width="2"/><path d="M4-5L12 0 4 5z" fill="${c}"/></g>`);
arrow('C', 200, 522, -90, '#6a2413'); arrow('C', 226, 600, 90, '#6a2413'); arrow('C', 363, 1095, 180, '#6a2413'); arrow('C', 636, 1070, 0, '#6a2413'); arrow('C', 1245, 1101, 180, '#6a2413');
arrow('F', 194, 90, -90, '#5b4310'); arrow('F', 215, 468, 90, '#5b4310');
out.icon += '<rect x="1387" y="563.500" width="54" height="37.500" rx="4" fill="#f1d5cc" stroke="#e0a898" stroke-width="1.500"/>';

// Upright labels sit a little above the em-box centre.
const label = (t, x, y, size, fill, rot = 0, extra = '') => {
  const by = rot ? y : y - 2, bx = Math.abs(rot) > 80 ? x - 2 * Math.sign(-rot) : x;
  out.label += `<text x="${bx}" y="${by}" font-size="${size}" fill="${fill}" transform="rotate(${rot} ${bx} ${by})" ${extra}>${t}</text>`;
};
const bare = 'style="stroke:none"', onRed = 'style="stroke:#eeb4a1"', onOr = 'style="stroke:#f6d5a6"';
label('431', 1414, 582, 24, '#7b3f30', 0, bare);
[['奥谷町', 383, 555], ['石橋町', 816, 611], ['大輪町', 1233, 873], ['北堀町', 583, 1025], ['北田町', 1083, 1116]].forEach(p => label(...p, 27.500, '#777'));
label('学園二丁目', 1625, 556, 23.700, '#777'); label('学園一丁目', 1621, 865, 23.700, '#777');
label('島根大学', 1240, 736, 23.700, '#6c6c2c'); label('教育学部', 1240, 768, 23.700, '#6c6c2c'); label('附属学園', 1240, 800, 23.700, '#6c6c2c');
label('島根県立', 275, 733, 19.600, '#86864a'); label('松江北高', 275, 760, 19.600, '#86864a'); label('等学校', 276, 786, 19.600, '#86864a');
label('島根県赤', 1068, 964, 19.800, '#c4403e'); label('十字血液', 1068, 991, 19.800, '#c4403e'); label('センター', 1068, 1017, 19.800, '#c4403e');
label('附属中前', 1423, 713, 19.800, '#333'); label('北田橋', 1415, 994, 19.800, '#333');
label('国道431号', 1679, 718, 19.500, '#3b2a25', 0, onRed); label('国道431号', 1907, 712, 19.500, '#3b2a25', 0, onRed);
label('国道431号', 1427, 419, 19.500, '#3b2a25', -90, onRed); label('国道431号', 1167, 482, 19.500, '#3b2a25', -38, onRed); label('国道431号', 1025, 758, 19.500, '#3b2a25', -87, onRed);
label('松江島根線', 1424, 843, 19.700, '#44371f', -90, onOr); label('松江島根線', 1416, 1071, 19.700, '#44371f', 90, onOr);
label('北田川', 1346, 979, 23, '#6384bd', 6, 'style="stroke:#cfe2ea"'); label('北田川', 799, 1150, 23, '#6384bd', -48, 'style="stroke:#cfe2ea"');
out.label += '<path id="shore" d="M238 972Q285 1010 310 1050T338 1108" fill="none"/><text font-size="18.500" fill="#44371f" style="text-anchor:start;stroke:#f6d5a6"><textPath href="#shore">松江鹿島美保関線</textPath></text>';

document.getElementById('tiles').innerHTML = ['land', 'water', 'building', 'casing', 'road', 'main', 'path', 'over', 'icon', 'label'].map(k => `<g>${out[k]}</g>`).join('');
```
